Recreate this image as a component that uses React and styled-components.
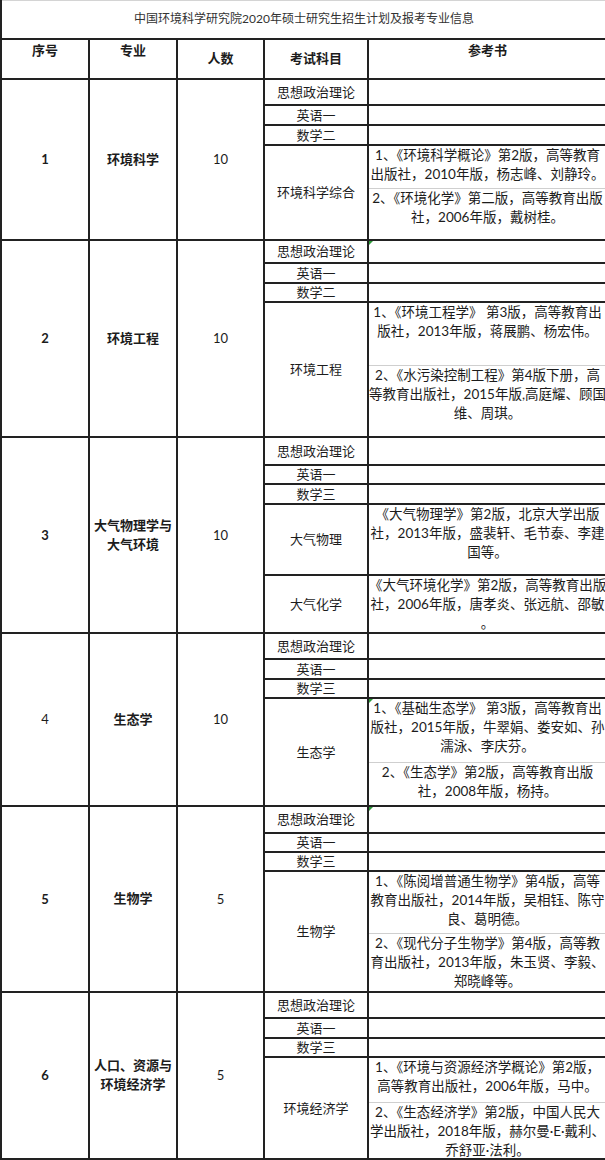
import React from "react";
import styled, { createGlobalStyle, css } from "styled-components";

const GlobalStyle = createGlobalStyle`
  html, body {
    margin: 0;
    padding: 0;
    background: #ffffff;
    overflow: hidden;
  }
`;

const FONT = `"Lato", "Noto Sans CJK SC", "Noto Sans", sans-serif`;

// 整张表
const Sheet = styled.table`
  border-collapse: collapse;
  table-layout: fixed;
  width: 605px;
  font-family: ${FONT};
  color: #1c1c1c;
`;

const Row = styled.tr`
  height: ${(p) => p.$h}px;
`;

// 标题行
const TitleCell = styled.td`
  height: 36px;
  padding: 0;
  font-size: 12px;
  line-height: 16px;
  color: #333;
  text-align: center;
  vertical-align: middle;
  border-top: 1px solid #d4d4d4;
  border-left: 2px solid #222;
  border-bottom: 2px solid #222;
`;

// 表头
const HeadCell = styled.th`
  padding: ${(p) => (p.$top ? "1px 0 0" : "0")};
  font-size: 13px;
  font-weight: 700;
  line-height: 19px;
  text-align: center;
  vertical-align: ${(p) => (p.$top ? "top" : "middle")};
  border: 2px solid #222;
  border-right: ${(p) => (p.$last ? "none" : "2px solid #222")};
`;

// 普通单元格
const Cell = styled.td`
  padding: 0;
  font-size: 13px;
  font-weight: ${(p) => (p.$bold ? 700 : 400)};
  line-height: 16px;
  text-align: center;
  vertical-align: middle;
  border: 2px solid #222;
  white-space: nowrap;
`;

const MajorLine = styled.span`
  display: block;
  line-height: 19px;
`;

// 参考书单元格
const BookCell = styled.td`
  position: relative;
  padding: 0;
  font-size: 13.5px;
  line-height: 19px;
  text-align: center;
  vertical-align: top;
  border: 2px solid #222;
  border-right: none;
  ${(p) =>
    p.$split === "first" &&
    css`
      border-bottom: 1px solid #cfcfcf;
    `}
  ${(p) =>
    p.$split === "second" &&
    css`
      border-top: 1px solid #cfcfcf;
    `}
  ${(p) =>
    p.$mark &&
    css`
      &::before {
        content: "";
        position: absolute;
        left: 0;
        top: 0;
        border-top: 4px solid #2e9b3a;
        border-right: 4px solid transparent;
      }
    `}
`;

// 单元格内容裁切（与 Excel 一样超出部分被截掉）
const Clip = styled.div`
  height: ${(p) => p.$h}px;
  overflow: hidden;
`;

const Line = styled.span`
  display: block;
  white-space: nowrap;
`;

const groups = [
  {
    no: "1",
    noBold: true,
    major: ["环境科学"],
    count: "10",
    base: ["思想政治理论", "英语一", "数学二"],
    heights: [26, 20, 20, 44, 51],
    finals: [
      {
        subject: "环境科学综合",
        books: [
          ["1、《环境科学概论》第2版，高等教育", "出版社，2010年版，杨志峰、刘静玲。"],
          ["2、《环境化学》第二版，高等教育出版", "社，2006年版，戴树桂。"],
        ],
      },
    ],
  },
  {
    no: "2",
    noBold: true,
    major: ["环境工程"],
    count: "10",
    base: ["思想政治理论", "英语一", "数学二"],
    heights: [23, 20, 19, 64, 71],
    mark: true,
    finals: [
      {
        subject: "环境工程",
        books: [
          ["1、《环境工程学》 第3版，高等教育出", "版社，2013年版，蒋展鹏、杨宏伟。"],
          ["2、《水污染控制工程》第4版下册，高", "等教育出版社，2015年版,高庭耀、顾国", "维、周琪。"],
        ],
      },
    ],
  },
  {
    no: "3",
    noBold: true,
    major: ["大气物理学与", "大气环境"],
    count: "10",
    base: ["思想政治理论", "英语一", "数学三"],
    heights: [28, 19, 20, 71, 58],
    finals: [
      {
        subject: "大气物理",
        books: [["《大气物理学》第2版，北京大学出版", "社，2013年版，盛裴轩、毛节泰、李建", "国等。"]],
      },
      {
        subject: "大气化学",
        books: [["《大气环境化学》第2版，高等教育出版", "社，2006年版，唐孝炎、张远航、邵敏", "。"]],
      },
    ],
  },
  {
    no: "4",
    noBold: false,
    major: ["生态学"],
    count: "10",
    base: ["思想政治理论", "英语一", "数学三"],
    heights: [26, 20, 19, 65, 43],
    bookMark: true,
    finals: [
      {
        subject: "生态学",
        books: [
          ["1、《基础生态学》 第3版，高等教育出", "版社，2015年版，牛翠娟、娄安如、孙", "濡泳、李庆芬。"],
          ["2、《生态学》第2版，高等教育出版", "社，2008年版，杨持。"],
        ],
      },
    ],
  },
  {
    no: "5",
    noBold: true,
    major: ["生物学"],
    count: "5",
    base: ["思想政治理论", "英语一", "数学三"],
    heights: [27, 19, 19, 63, 58],
    mark: true,
    finals: [
      {
        subject: "生物学",
        books: [
          ["1、《陈阅增普通生物学》第4版，高等", "教育出版社，2014年版，吴相钰、陈守", "良、葛明德。"],
          ["2、《现代分子生物学》第4版，高等教", "育出版社，2013年版，朱玉贤、李毅、", "郑晓峰等。"],
        ],
      },
    ],
  },
  {
    no: "6",
    noBold: true,
    major: ["人口、资源与", "环境经济学"],
    count: "5",
    base: ["思想政治理论", "英语一", "数学三"],
    heights: [26, 20, 19, 46, 56],
    finals: [
      {
        subject: "环境经济学",
        books: [
          ["1、《环境与资源经济学概论》第2版，", "高等教育出版社，2006年版，马中。"],
          ["2、《生态经济学》第2版，中国人民大", "学出版社，2018年版，赫尔曼·E·戴利、", "乔舒亚·法利。"],
        ],
      },
    ],
  },
];

function Book({ lines, h }) {
  return (
    <Clip $h={h - 2}>
      {lines.map((t, i) => (
        <Line key={i}>{t}</Line>
      ))}
    </Clip>
  );
}

function Group({ g }) {
  const rows = [];
  g.base.forEach((subject, i) => {
    rows.push(
      <Row key={`b${i}`} $h={g.heights[i]}>
        {i === 0 && (
          <>
            <Cell rowSpan={5} $bold={g.noBold}>
              {g.no}
            </Cell>
            <Cell rowSpan={5} $bold>
              {g.major.map((m) => (
                <MajorLine key={m}>{m}</MajorLine>
              ))}
            </Cell>
            <Cell rowSpan={5}>{g.count}</Cell>
          </>
        )}
        <Cell>{subject}</Cell>
        <BookCell $mark={i === 0 && g.mark} />
      </Row>
    );
  });

  if (g.finals.length === 1) {
    const f = g.finals[0];
    rows.push(
      <Row key="f0" $h={g.heights[3]}>
        <Cell rowSpan={2}>{f.subject}</Cell>
        <BookCell $split="first" $mark={g.bookMark}>
          <Book lines={f.books[0]} h={g.heights[3]} />
        </BookCell>
      </Row>,
      <Row key="f1" $h={g.heights[4]}>
        <BookCell $split="second">
          <Book lines={f.books[1]} h={g.heights[4]} />
        </BookCell>
      </Row>
    );
  } else {
    g.finals.forEach((f, i) => {
      rows.push(
        <Row key={`f${i}`} $h={g.heights[3 + i]}>
          <Cell>{f.subject}</Cell>
          <BookCell>
            <Book lines={f.books[0]} h={g.heights[3 + i]} />
          </BookCell>
        </Row>
      );
    });
  }
  return rows;
}

export default function App() {
  return (
    <>
      <GlobalStyle />
      <Sheet>
        <colgroup>
          <col style={{ width: 88 }} />
          <col style={{ width: 88 }} />
          <col style={{ width: 87 }} />
          <col style={{ width: 104 }} />
          <col style={{ width: 238 }} />
        </colgroup>
        <tbody>
          <Row $h={38}>
            <TitleCell colSpan={5}>
              中国环境科学研究院2020年硕士研究生招生计划及报考专业信息
            </TitleCell>
          </Row>
          <Row $h={40}>
            <HeadCell $top>序号</HeadCell>
            <HeadCell $top>专业</HeadCell>
            <HeadCell>人数</HeadCell>
            <HeadCell>考试科目</HeadCell>
            <HeadCell $top $last>
              参考书
            </HeadCell>
          </Row>
          {groups.map((g) => (
            <Group key={g.no} g={g} />
          ))}
        </tbody>
      </Sheet>
    </>
  );
}
